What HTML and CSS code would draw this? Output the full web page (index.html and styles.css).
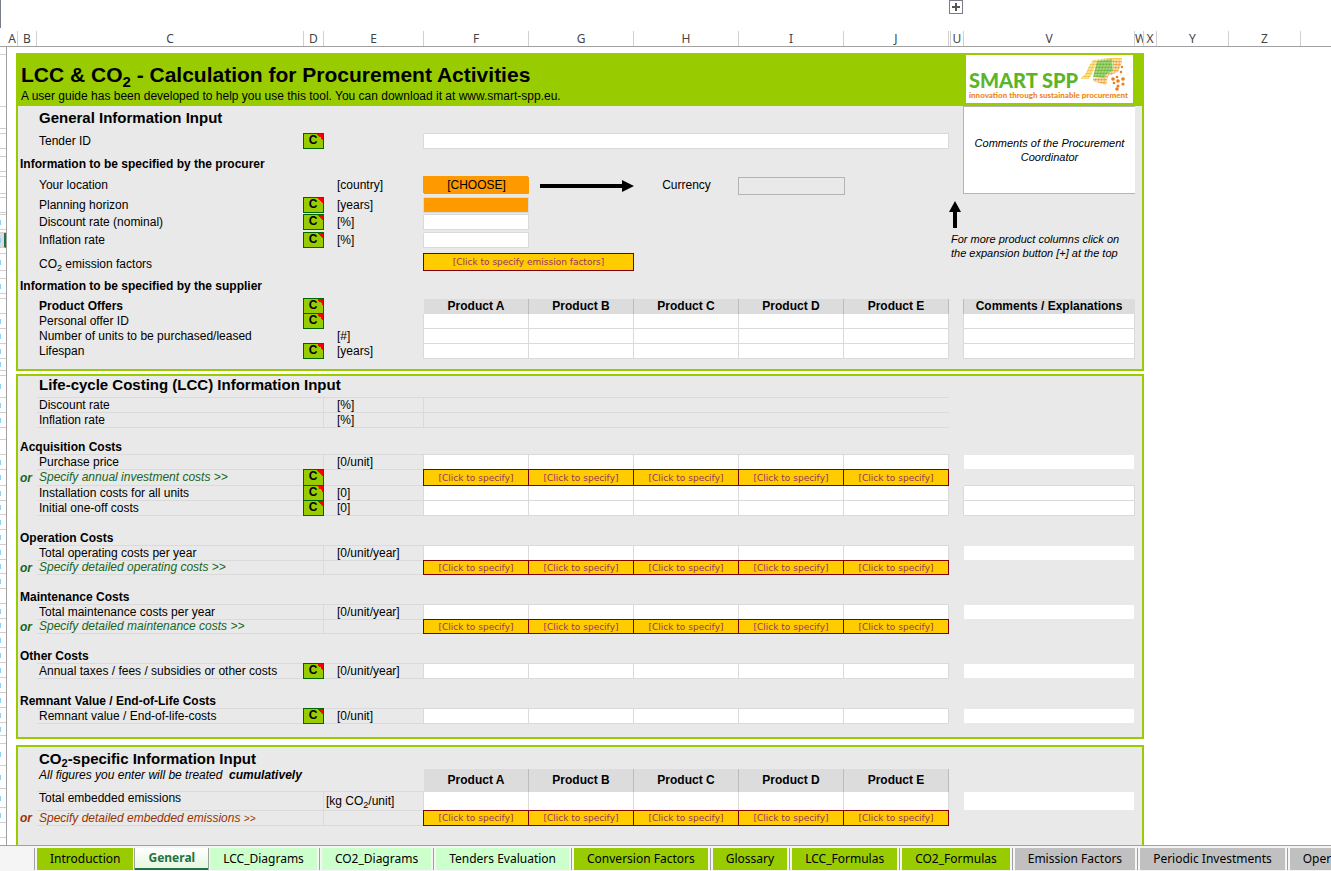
FILE: index.html
```html
<!DOCTYPE html>
<html lang="en">
<head>
<meta charset="utf-8">
<title>LCC &amp; CO2 - Calculation for Procurement Activities</title>
<link rel="stylesheet" href="styles.css">
</head>
<body>
<div class="outline-bar cols"><button class="expand" aria-label="Expand columns"><svg width="12" height="12" viewBox="0 0 12 12"><path d="M6 2v8M2 6h8" stroke="#555" stroke-width="2"/></svg></button></div>
<div class="col-heads cols">
<span>A</span><span>B</span><span>C</span><span>D</span><span>E</span><span>F</span><span>G</span><span>H</span><span>I</span><span>J</span><span></span><span>U</span><span>V</span><span>W</span><span>X</span><span>Y</span><span>Z</span><span></span>
</div>
<div class="work">
<div class="row-heads" aria-hidden="true">
<i class="h8"></i><i class="h52"></i><i class="h22"></i><i class="h5"></i><i class="h15"></i><i class="h8"></i><i class="h15"></i><i class="h5"></i><i class="h17"></i><i class="h4"></i><i class="h15"></i><i class="h2"></i><i class="h15 m"></i><i class="h3"></i><i class="h15 m on"></i><i class="h6"></i><i class="h17 m"></i><i class="h8"></i><i class="h15 m"></i><i class="h5"></i><i class="h15"></i><i class="h15 m"></i><i class="h15 m"></i><i class="h15 m"></i><i class="h12 m"></i><i class="h5"></i><i class="h22 m"></i><i class="h15 m"></i><i class="h15 m"></i><i class="h12"></i><i class="h15"></i><i class="h15 m"></i><i class="h16 m"></i><i class="h15 m"></i><i class="h14 m"></i><i class="h15 m"></i><i class="h15 m"></i><i class="h15 m"></i><i class="h14 m"></i><i class="h15 m"></i><i class="h15"></i><i class="h15 m"></i><i class="h14 m"></i><i class="h15 m"></i><i class="h15 m"></i><i class="h15 m"></i><i class="h15 m"></i><i class="h15 m"></i><i class="h15 m"></i><i class="h13 m"></i><i class="h8"></i><i class="h22 m"></i><i class="h23 m"></i><i class="h19 m"></i><i class="h15 m"></i><i class="h15"></i>
</div>
<main class="sheet">

<section class="panel">
<header class="banner">
<div class="banner-text">
<h1>LCC &amp; CO<sub>2</sub> - Calculation for Procurement Activities</h1>
<p>A user guide has been developed to help you use this tool. You can download it at www.smart-spp.eu.</p>
</div>
<div class="logo">
<div class="logo-top"><span class="logo-name">SMART SPP</span>
<svg class="logo-map" width="46" height="34" viewBox="0 0 46 34">
<defs>
<pattern id="py" width="3" height="3" patternUnits="userSpaceOnUse" patternTransform="skewX(-22)"><rect width="3" height="3" fill="#fff6cf"/><circle cx="1.5" cy="1.5" r="1.3" fill="#f4bd22"/></pattern>
<pattern id="pg" width="3" height="3" patternUnits="userSpaceOnUse" patternTransform="skewX(-16)"><rect width="3" height="3" fill="#c9e6a6"/><rect x=".3" y=".3" width="2.3" height="2.3" fill="#62b32e"/></pattern>
<pattern id="po" width="3" height="3" patternUnits="userSpaceOnUse" patternTransform="skewX(-10)"><rect width="3" height="3" fill="#fff"/><circle cx="1.5" cy="1.5" r="1.4" fill="#f29a2a"/></pattern>
</defs>
<path d="M13 3 30 1 42 1 42 5 17 5 12 17 9 22 0 22 6 16 8 11z" fill="url(#py)"/>
<path d="M17 4 32 2 33 14 27 17 24 21 13 20z" fill="url(#pg)"/>
<path d="M33 3 42 5 40 10 38 15 33 17 28 19 26 28 13 24 13 21 24 21 27 17 33 14z" fill="url(#po)"/>
<g fill="#ef7d17"><circle cx="33" cy="22" r="1.8"/><circle cx="37" cy="20" r="1.3"/><circle cx="38" cy="24" r="1.8"/><circle cx="43" cy="22" r="1.8"/><circle cx="34" cy="26" r="1.3"/><circle cx="38" cy="29" r="1.5"/><circle cx="43" cy="27" r="1.6"/><circle cx="37" cy="32" r="1.8"/><circle cx="42" cy="10" r="1.2"/><circle cx="41" cy="15" r="1.3"/></g>
</svg></div>
<div class="logo-tag">innovation through sustainable procurement</div>
</div>
</header>
<table>
<colgroup><col class="cB"><col class="cC"><col class="cD"><col class="cE"><col><col><col><col><col><col class="cU"><col class="cV"><col class="cW"></colgroup>
<tr class="h23"><td></td><th class="title" colspan="8">General Information Input</th><td></td><td class="comment" rowspan="7">Comments of the Procurement Coordinator</td><td></td></tr>
<tr class="h5"><td colspan="4"></td><td class="bb" colspan="5"></td></tr>
<tr class="h15"><td></td><td class="lab">Tender ID</td><td><span class="c">C</span></td><td class="br"></td><td class="w" colspan="5"><input aria-label="Tender ID"></td></tr>
<tr class="h8"><td colspan="10"></td></tr>
<tr class="h15"><th class="head">Information to be specified by the procurer</th></tr>
<tr class="h5"><td colspan="10"></td></tr>
<tr class="h17"><td></td><td class="lab"><label for="loc">Your location</label></td><td></td><td class="unit">[country]</td><td class="choose"><select id="loc"><option>[CHOOSE]</option></select></td><td class="arrow"><svg width="94" height="12" viewBox="0 0 94 12"><path d="M0 4h82V0l12 6-12 6V8H0z"/></svg></td><td class="mid"><label for="cur">Currency</label></td><td><input id="cur" class="currency" readonly></td></tr>
<tr class="h4"><td colspan="4"></td><td class="bb"></td><td colspan="4"></td><td class="note" colspan="2" rowspan="8"><svg width="12" height="27" viewBox="0 0 12 27"><path d="M6 0l6 11H8v16H4V11H0z"/></svg><p>For more product columns click on the expansion button [+] at the top</p></td></tr>
<tr class="h15"><td></td><td class="lab">Planning horizon</td><td><span class="c">C</span></td><td class="unit br">[years]</td><td class="w o"><input aria-label="Planning horizon"></td></tr>
<tr class="h2"><td colspan="4"></td><td class="bb"></td></tr>
<tr class="h15"><td></td><td class="lab">Discount rate (nominal)</td><td><span class="c">C</span></td><td class="unit br">[%]</td><td class="w"><input aria-label="Discount rate"></td></tr>
<tr class="h3"><td colspan="4"></td><td class="bb"></td></tr>
<tr class="h15"><td></td><td class="lab">Inflation rate</td><td><span class="c">C</span></td><td class="unit br">[%]</td><td class="w"><input aria-label="Inflation rate"></td></tr>
<tr class="h6"><td colspan="9"></td></tr>
<tr class="h17"><td></td><td class="lab low">CO<sub>2</sub> emission factors</td><td></td><td></td><td class="k" colspan="2"><button>[Click to specify emission factors]</button></td></tr>
<tr class="h8"><td colspan="12"></td></tr>
<tr class="h15"><th class="head">Information to be specified by the supplier</th></tr>
<tr class="h5"><td colspan="12"></td></tr>
<tr class="h15"><td></td><th class="lab">Product Offers</th><td><span class="c">C</span></td><td></td><th class="p">Product A</th><th class="p">Product B</th><th class="p">Product C</th><th class="p">Product D</th><th class="p">Product E</th><td class="bd"></td><th class="p last">Comments / Explanations</th></tr>
<tr class="h15"><td></td><td class="lab">Personal offer ID</td><td><span class="c">C</span></td><td class="br"></td><td class="w"><input aria-label="Offer ID A"></td><td class="w"><input aria-label="Offer ID B"></td><td class="w"><input aria-label="Offer ID C"></td><td class="w"><input aria-label="Offer ID D"></td><td class="w"><input aria-label="Offer ID E"></td><td class="br"></td><td class="w"><input aria-label="Offer ID comments"></td></tr>
<tr class="h15"><td></td><td class="lab">Number of units to be purchased/leased</td><td></td><td class="unit br">[#]</td><td class="w"><input aria-label="Units A"></td><td class="w"><input aria-label="Units B"></td><td class="w"><input aria-label="Units C"></td><td class="w"><input aria-label="Units D"></td><td class="w"><input aria-label="Units E"></td><td class="br"></td><td class="w"><input aria-label="Units comments"></td></tr>
<tr class="h15"><td></td><td class="lab">Lifespan</td><td><span class="c">C</span></td><td class="unit br">[years]</td><td class="w"><input aria-label="Lifespan A"></td><td class="w"><input aria-label="Lifespan B"></td><td class="w"><input aria-label="Lifespan C"></td><td class="w"><input aria-label="Lifespan D"></td><td class="w"><input aria-label="Lifespan E"></td><td class="br"></td><td class="w"><input aria-label="Lifespan comments"></td></tr>
<tr class="h10"><td colspan="12"></td></tr>
</table>
</section>

<section class="panel">
<table>
<colgroup><col class="cB"><col class="cC"><col class="cD"><col class="cE"><col><col><col><col><col><col class="cU"><col class="cV"><col class="cW"></colgroup>
<tr class="h22"><td></td><th class="title bb high" colspan="8">Life-cycle Costing (LCC) Information Input</th><td></td><td></td><td></td></tr>
<tr class="h15 ln"><td></td><td class="lab">Discount rate</td><td class="br"></td><td class="unit br">[%]</td><td colspan="5"></td></tr>
<tr class="h15 ln"><td></td><td class="lab">Inflation rate</td><td class="br"></td><td class="unit br">[%]</td><td colspan="5"></td></tr>
<tr class="h12"><td colspan="12"></td></tr>
<tr class="h15"><th class="head">Acquisition Costs</th><td class="bb" colspan="8"></td></tr>
<tr class="h15 ln"><td></td><td class="lab">Purchase price</td><td class="br"></td><td class="unit br">[0/unit]</td><td class="w"><input aria-label="Purchase price A"></td><td class="w"><input aria-label="Purchase price B"></td><td class="w"><input aria-label="Purchase price C"></td><td class="w"><input aria-label="Purchase price D"></td><td class="w"><input aria-label="Purchase price E"></td><td></td><td class="w plain"><input aria-label="Purchase price comments"></td></tr>
<tr class="h16 ln"><td class="or">or</td><td class="lab"><a href="#">Specify annual investment costs &gt;&gt;</a></td><td><span class="c">C</span></td><td class="br"></td><td class="k"><button>[Click to specify]</button></td><td class="k"><button>[Click to specify]</button></td><td class="k"><button>[Click to specify]</button></td><td class="k"><button>[Click to specify]</button></td><td class="k"><button>[Click to specify]</button></td><td></td><td class="bb"></td></tr>
<tr class="h15 ln"><td></td><td class="lab">Installation costs for all units</td><td><span class="c">C</span></td><td class="unit br">[0]</td><td class="w"><input aria-label="Installation A"></td><td class="w"><input aria-label="Installation B"></td><td class="w"><input aria-label="Installation C"></td><td class="w"><input aria-label="Installation D"></td><td class="w"><input aria-label="Installation E"></td><td class="br"></td><td class="w"><input aria-label="Installation comments"></td></tr>
<tr class="h14 ln"><td></td><td class="lab">Initial one-off costs</td><td><span class="c">C</span></td><td class="unit br">[0]</td><td class="w"><input aria-label="One-off A"></td><td class="w"><input aria-label="One-off B"></td><td class="w"><input aria-label="One-off C"></td><td class="w"><input aria-label="One-off D"></td><td class="w"><input aria-label="One-off E"></td><td class="br"></td><td class="w"><input aria-label="One-off comments"></td></tr>
<tr class="h15"><td colspan="12"></td></tr>
<tr class="h15"><th class="head">Operation Costs</th><td class="bb" colspan="8"></td></tr>
<tr class="h15 ln"><td></td><td class="lab">Total operating costs per year</td><td class="br"></td><td class="unit br">[0/unit/year]</td><td class="w"><input aria-label="Operating A"></td><td class="w"><input aria-label="Operating B"></td><td class="w"><input aria-label="Operating C"></td><td class="w"><input aria-label="Operating D"></td><td class="w"><input aria-label="Operating E"></td><td></td><td class="w plain"><input aria-label="Operating comments"></td></tr>
<tr class="h14 ln"><td class="or">or</td><td class="lab"><a href="#">Specify detailed operating costs &gt;&gt;</a></td><td class="br"></td><td class="br"></td><td class="k"><button>[Click to specify]</button></td><td class="k"><button>[Click to specify]</button></td><td class="k"><button>[Click to specify]</button></td><td class="k"><button>[Click to specify]</button></td><td class="k"><button>[Click to specify]</button></td></tr>
<tr class="h15"><td colspan="12"></td></tr>
<tr class="h15"><th class="head">Maintenance Costs</th><td class="bb" colspan="8"></td></tr>
<tr class="h15 ln"><td></td><td class="lab">Total maintenance costs per year</td><td class="br"></td><td class="unit br">[0/unit/year]</td><td class="w"><input aria-label="Maintenance A"></td><td class="w"><input aria-label="Maintenance B"></td><td class="w"><input aria-label="Maintenance C"></td><td class="w"><input aria-label="Maintenance D"></td><td class="w"><input aria-label="Maintenance E"></td><td></td><td class="w plain"><input aria-label="Maintenance comments"></td></tr>
<tr class="h14 ln"><td class="or">or</td><td class="lab"><a href="#">Specify detailed maintenance costs &gt;&gt;</a></td><td class="br"></td><td class="br"></td><td class="k"><button>[Click to specify]</button></td><td class="k"><button>[Click to specify]</button></td><td class="k"><button>[Click to specify]</button></td><td class="k"><button>[Click to specify]</button></td><td class="k"><button>[Click to specify]</button></td></tr>
<tr class="h15"><td colspan="12"></td></tr>
<tr class="h15"><th class="head">Other Costs</th><td class="bb" colspan="8"></td></tr>
<tr class="h15 ln"><td></td><td class="lab">Annual taxes / fees / subsidies or other costs</td><td><span class="c">C</span></td><td class="unit br">[0/unit/year]</td><td class="w"><input aria-label="Other A"></td><td class="w"><input aria-label="Other B"></td><td class="w"><input aria-label="Other C"></td><td class="w"><input aria-label="Other D"></td><td class="w"><input aria-label="Other E"></td><td></td><td class="w plain"><input aria-label="Other comments"></td></tr>
<tr class="h15"><td colspan="12"></td></tr>
<tr class="h15"><th class="head">Remnant Value / End-of-Life Costs</th><td class="bb" colspan="8"></td></tr>
<tr class="h15 ln"><td></td><td class="lab">Remnant value / End-of-life-costs</td><td><span class="c">C</span></td><td class="unit br">[0/unit]</td><td class="w"><input aria-label="Remnant A"></td><td class="w"><input aria-label="Remnant B"></td><td class="w"><input aria-label="Remnant C"></td><td class="w"><input aria-label="Remnant D"></td><td class="w"><input aria-label="Remnant E"></td><td></td><td class="w plain"><input aria-label="Remnant comments"></td></tr>
<tr class="h13"><td colspan="12"></td></tr>
</table>
</section>

<section class="panel open">
<table>
<colgroup><col class="cB"><col class="cC"><col class="cD"><col class="cE"><col><col><col><col><col><col class="cU"><col class="cV"><col class="cW"></colgroup>
<tr class="h22"><td></td><th class="title" colspan="8">CO<sub>2</sub>-specific Information Input</th><td></td><td></td><td></td></tr>
<tr class="h23 ln"><td></td><td class="lab em high" colspan="2">All figures you enter will be treated &nbsp;<b>cumulatively</b></td><td></td><th class="p">Product A</th><th class="p">Product B</th><th class="p">Product C</th><th class="p">Product D</th><th class="p">Product E</th></tr>
<tr class="h19 ln"><td></td><td class="lab high">Total embedded emissions</td><td class="br"></td><td class="unit near br">[kg CO<sub>2</sub>/unit]</td><td class="w"><input aria-label="Emissions A"></td><td class="w"><input aria-label="Emissions B"></td><td class="w"><input aria-label="Emissions C"></td><td class="w"><input aria-label="Emissions D"></td><td class="w"><input aria-label="Emissions E"></td><td></td><td class="w plain"><input aria-label="Emissions comments"></td></tr>
<tr class="h15 ln rust"><td class="or">or</td><td class="lab"><a href="#">Specify detailed embedded emissions <small>&gt;&gt;</small></a></td><td class="br"></td><td class="br"></td><td class="k"><button>[Click to specify]</button></td><td class="k"><button>[Click to specify]</button></td><td class="k"><button>[Click to specify]</button></td><td class="k"><button>[Click to specify]</button></td><td class="k"><button>[Click to specify]</button></td></tr>
</table>
</section>
</main>
</div>
<nav class="tabs">
<button class="green">Introduction</button><button class="active">General</button><button class="mint">LCC_Diagrams</button><button class="mint">CO2_Diagrams</button><button class="mint">Tenders Evaluation</button><button class="green">Conversion Factors</button><button class="green">Glossary</button><button class="green">LCC_Formulas</button><button class="green">CO2_Formulas</button><button class="grey">Emission Factors</button><button class="grey">Periodic Investments</button><button class="grey">Oper</button>
</nav>
</body>
</html>
```
FILE: styles.css
```css
:root {
  --green: #99cc00;
  --line: #dadada;
  --panel: #e9e9e9;
}
* { box-sizing: border-box; }
body {
  margin: 0;
  height: 100vh;
  overflow: hidden;
  display: flex;
  flex-direction: column;
  background: #fff;
  color: #000;
  font: 12px/14px "Liberation Sans", Arial, sans-serif;
}
button, input, select { font: inherit; color: inherit; margin: 0; padding: 0; border: 0; border-radius: 0; background: none; }
h1, p { margin: 0; }
sub { font-size: 9px; line-height: 0; vertical-align: -3px; }

.cols {
  display: grid;
  grid-template-columns: 11px 19px 267px 20px 100px repeat(5, minmax(0, 1fr)) 2px 13px 171px 9px 13px 72px 72px 30px;
  padding-left: 7px;
}
.outline-bar { height: 31px; background: linear-gradient(#7a7f8c, #7a7f8c) 0 0 / 1px 28px no-repeat; }
.expand { grid-column: 11 / 13; width: 14px; height: 14px; border: 1px solid #7a7a88; }
.expand svg { display: block; }
.col-heads {
  height: 16px;
  border-bottom: 1px solid #a0a0a0;
  font: 12px/15px "Noto Sans", sans-serif;
  color: #444;
  text-align: center;
}
.col-heads span { border-right: 1px solid #d0d0d0; overflow: hidden; }
.col-heads span:last-child { border-right: 0; }

.work { flex: 1; min-height: 0; display: flex; overflow: hidden; }
.row-heads { width: 7px; border-right: 1px solid #a0a0a0; overflow: hidden; }
.row-heads i { display: block; border-bottom: 1px solid #d0d0d0; }
.row-heads .m { background: linear-gradient(#8fd0f4, #8fd0f4) 0 50% / 1px 5px no-repeat; }
.row-heads .on { background-color: #dcdcdc; border-right: 2px solid #217346; }
.sheet { flex: 1; min-width: 0; padding: 6px 187px 0 9px; display: flex; flex-direction: column; }
.panel { border: 2px solid var(--green); background: var(--panel); flex: none; margin-bottom: 3px; }
.panel + .panel { margin-bottom: 6px; }
.panel.open { flex: 1 0 auto; border-bottom: 0; margin-bottom: 0; }

.banner { height: 51px; background: var(--green); display: flex; justify-content: space-between; padding: 0 9px 3px 3px; }
.banner-text { padding-top: 5px; white-space: nowrap; }
.banner h1 { font-size: 21px; line-height: 29px; }
.banner h1 sub { font-size: 15px; vertical-align: -5px; }
.logo { width: 167px; height: 48px; background: #fff; padding: 2px 3px; display: flex; flex-direction: column; }
.logo-top { display: flex; align-items: flex-end; height: 34px; gap: 2px; }
.logo-name { font: 900 20px/18px Lato, sans-serif; color: #5cb528; white-space: nowrap; padding-bottom: 2px; }
.logo-map { flex: none; }
.logo-tag { font: 900 8px/8px Lato, sans-serif; color: #f08518; white-space: nowrap; }

table { width: 100%; table-layout: fixed; border-collapse: separate; border-spacing: 0; }
.cB { width: 19px; }
.cC { width: 267px; }
.cD { width: 20px; }
.cE { width: 100px; }
.cU { width: 15px; }
.cV { width: 171px; }
.cW { width: 7px; }
td, th { height: inherit; padding: 0; white-space: nowrap; line-height: 13px; text-align: left; font-weight: normal; vertical-align: middle; }
.h2 { height: 2px; } .h3 { height: 3px; } .h4 { height: 4px; } .h5 { height: 5px; }
.h6 { height: 6px; } .h8 { height: 8px; } .h10 { height: 10px; } .h12 { height: 12px; }
.h13 { height: 13px; } .h14 { height: 14px; } .h15 { height: 15px; } .h16 { height: 16px; }
.h17 { height: 17px; } .h19 { height: 19px; } .h22 { height: 22px; } .h23 { height: 23px; }
.h52 { height: 52px; }

.title { font-size: 15px; font-weight: bold; line-height: 17px; padding-left: 2px; }
.title sub { font-size: 11px; }
.head { font-weight: bold; padding-left: 2px; }
.lab { padding-left: 2px; }
th.lab { font-weight: bold; }
.unit { padding-left: 13px; }
.unit.near { padding-left: 2px; }
.em, .lab a { font-style: italic; }
.lab a { color: #15661f; text-decoration: none; }
.or { padding-left: 2px; color: #15661f; font-weight: bold; font-style: italic; }
.rust .or, .rust a { color: #993300; }
.lab small { font-size: 10px; }
.high { vertical-align: top; }
.low { vertical-align: bottom; }

.bb { border-bottom: 1px solid var(--line); }
.br { border-right: 1px solid var(--line); }
.bd { border-right: 1px solid #bcbcbc; }
.ln td:nth-child(n+2):nth-child(-n+9) { border-bottom: 1px solid var(--line); }
.w { background: #fff; border-right: 1px solid var(--line); border-bottom: 1px solid var(--line); }
.w.plain { border-color: var(--panel); }
.w.o { background: #ff9900; }
.w input { display: block; width: 100%; height: 100%; }
.p { background: #dcdcdc; border-right: 1px solid #bcbcbc; text-align: center; font-weight: bold; }
.p.last { border-right-color: #dcdcdc; }

td:has(.c) { border-right: 1px solid var(--line); border-bottom: 1px solid var(--line); }
.c {
  display: block;
  height: 100%;
  outline: 1px solid #006600;
  background: linear-gradient(45deg, transparent 50%, #f00 50%) 100% 0 / 6px 6px no-repeat var(--green);
  text-align: center;
  padding-right: 1px;
  font-weight: bold;
}
.k { background: #ffcc00; border-right: 1px solid #800000; border-bottom: 1px solid #800000; }
.k button {
  display: block;
  width: 100%;
  height: 100%;
  outline: 1px solid #800000;
  background: #ffcc00;
  color: #993366;
  font: 9px/12px "DejaVu Sans", sans-serif;
}
.choose { background: #ff9900; box-shadow: -1px -1px #ff9900; }
.choose select { appearance: none; display: block; width: 100%; height: 16px; text-align: center; text-align-last: center; background: #ff9900; }
.currency { display: block; width: 100%; height: 16px; outline: 1px solid #b4b4b4; }
.arrow { padding-left: 11px; }
.arrow svg, .note svg { display: block; }
.mid { text-align: center; }
.comment { background: #fff; border: 1px solid #b4b4b4; border-width: 1px 0; box-shadow: -1px 0 #b4b4b4; text-align: center; white-space: normal; font-size: 11px; line-height: 14px; font-style: italic; padding: 0 4px; }
.note { white-space: normal; font-size: 11px; line-height: 14px; font-style: italic; vertical-align: top; padding: 7px 0 0 2px; }
.note svg { margin-left: -2px; }
.note p { padding-top: 4px; }

.tabs {
  height: 26px;
  border-top: 1px solid #a0a0a0;
  background: #f5f5f5;
  display: flex;
  gap: 5px;
  padding: 2px 0 0 37px;
  overflow: hidden;
  white-space: nowrap;
}
.tabs button { flex: none; height: 22px; padding: 0 13px; font: 12px/22px "Noto Sans", sans-serif; box-shadow: -2px 0 #f5f5f5, -3px 0 #a0a0a0; }
.tabs .green { background: var(--green); }
.tabs .mint { background: #ccffcc; }
.tabs .grey { background: #c0c0c0; }
.tabs .active { margin: 0 -3px; background: linear-gradient(#fff, #e6f7df); color: #217346; font-weight: bold; border-bottom: 2px solid #217346; box-shadow: -1px 0 #a0a0a0, 1px 0 #a0a0a0; line-height: 20px; }
.tabs .active + button { box-shadow: none; }
```
